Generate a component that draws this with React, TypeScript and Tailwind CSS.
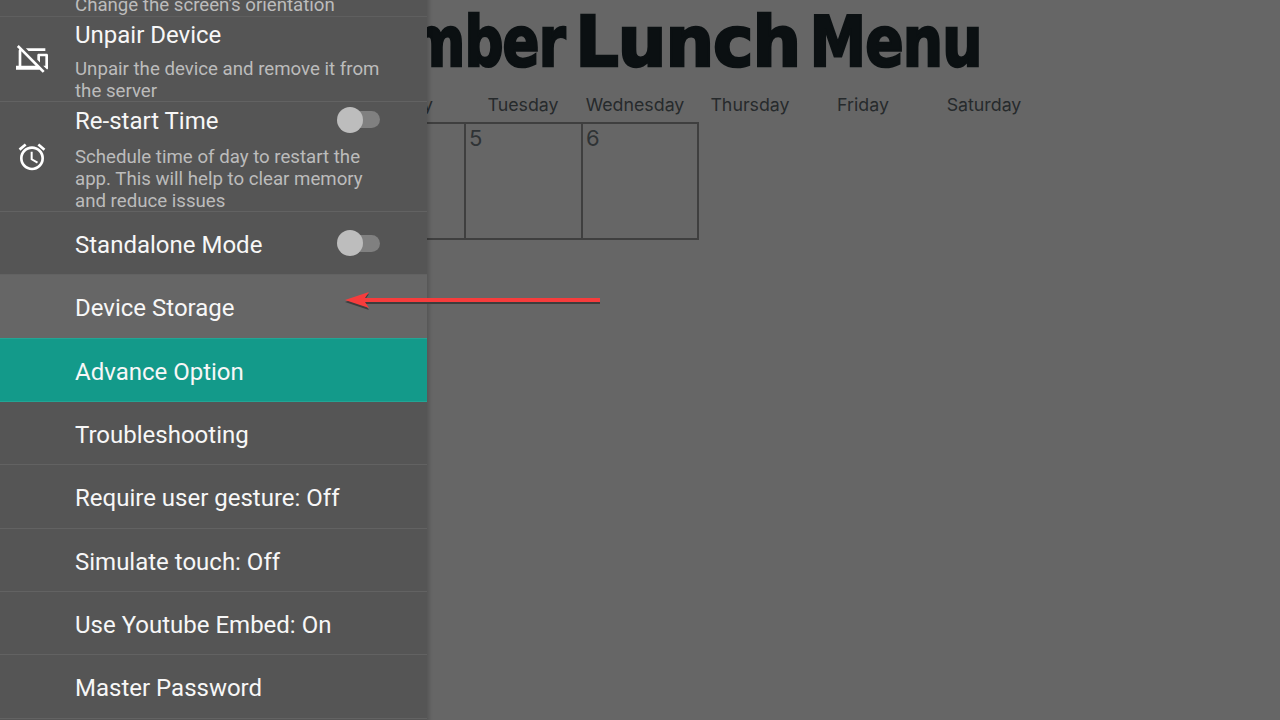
import React from "react";
import { MdOutlinePhonelinkOff, MdOutlineAccessAlarm, MdScreenRotation } from "react-icons/md";

function Toggle({ className = "" }: { className?: string }) {
  return (
    <div className={`relative ml-auto mr-[47px] w-[44px] h-[26px] shrink-0 flex items-center justify-end ${className}`}>
      <div className="w-[31px] h-[17px] rounded-full bg-[#808080]" />
      <div className="absolute left-[1px] top-0 w-[26px] h-[26px] rounded-full bg-[#bdbdbd]" />
    </div>
  );
}

function Row({ label, className = "border-[#626262]" }: { label: string; className?: string }) {
  return (
    <div className={`h-[63.33px] box-border border-b flex items-center pl-[75px] pt-[4px] text-[24px] text-[#f7f7f7] ${className}`}>
      {label}
    </div>
  );
}

function Arrow() {
  return (
    <svg className="absolute left-[340px] top-[288px]" width="265" height="24" viewBox="0 0 265 24">
      <path d="M5 13 L29 5 L25 11 L260 11 L260 15 L25 15 L29 21 Z" fill="#3d3d3d" transform="translate(0 1)" />
      <path d="M5 12 L29 4 L25 10 L260 10 L260 14 L25 14 L29 20 Z" fill="#f63c3c" />
    </svg>
  );
}

export default function App() {
  return (
    <div className="relative w-[1280px] h-[720px] overflow-hidden bg-[#666666] font-['Roboto',sans-serif]">
      <div className="pt-[1px]">
        <div className="w-[982px] h-[84px] pb-[2px] box-border flex items-center justify-end whitespace-nowrap text-[#0b1012] text-[69px] font-bold font-['DejaVu_Sans',sans-serif] [-webkit-text-stroke:2.5px_#0b1012] leading-none tracking-[-1px]">
          <div className="w-[300px] flex justify-end"><span className="inline-block origin-right scale-x-[0.79]">December</span></div>
          <div className="w-[223px] ml-[12px] flex justify-end"><span className="inline-block origin-right scale-x-[0.99]">Lunch</span></div>
          <div className="w-[167px] ml-[15px] flex justify-end"><span className="inline-block origin-right scale-x-[0.82]">Menu</span></div>
        </div>
        <div className="grid grid-cols-[116px_116px_108px_122px_104px_138px] ml-[349px] mt-[4px] h-[33px] items-center text-center text-[17.8px] text-[#262a2c] font-['Inter',sans-serif]">
          <div className="pr-[16px]">Monday</div>
          <div>Tuesday</div>
          <div>Wednesday</div>
          <div>Thursday</div>
          <div>Friday</div>
          <div>Saturday</div>
        </div>
        <div className="flex ml-[349px] h-[118px] text-[22px] text-[#2f3335] font-['Inter',sans-serif]">
          <div className="w-[117px] box-border border-y-2 border-r-2 border-[#3f3f3f]" />
          <div className="w-[117px] box-border border-y-2 border-r-2 border-[#3f3f3f] pl-[3px] leading-[28px]">5</div>
          <div className="w-[116px] box-border border-y-2 border-r-2 border-[#3f3f3f] pl-[3px] leading-[28px]">6</div>
        </div>
      </div>

      <div className="absolute left-0 top-[-45px] w-[427px] h-[770px] bg-[#555555] shadow-[2px_0_4px_rgba(0,0,0,0.18)]">
        <div className="h-[62px] box-border border-b border-[#5f5f5f] flex items-center">
          <div className="w-[75px] pl-[17px] shrink-0 text-white"><MdScreenRotation size={29} /></div>
          <div className="w-[320px] pb-[2px]">
            <div className="h-[34px] text-[24px] leading-[34px] text-[#f7f7f7]">Orientation</div>
            <div className="mt-[6px] text-[18.67px] leading-[22px] text-[#bcbcbc]">Change the screen's orientation</div>
          </div>
        </div>

        <div className="h-[85px] box-border border-b border-[#626262] flex items-center">
          <div className="w-[75px] pl-[16px] shrink-0 text-white"><MdOutlinePhonelinkOff size={32} /></div>
          <div className="w-[312px] pt-[2px]">
            <div className="h-[34px] text-[24px] leading-[34px] text-[#f7f7f7]">Unpair Device</div>
            <div className="mt-[6px] text-[18.67px] leading-[22px] text-[#bcbcbc]">Unpair the device and remove it from the server</div>
          </div>
        </div>

        <div className="h-[110px] box-border border-b border-[#626262] flex items-center">
          <div className="w-[75px] pl-[16px] shrink-0 text-white"><MdOutlineAccessAlarm size={32} /></div>
          <div className="flex-1 pt-[2px]">
            <div className="h-[34px] text-[24px] leading-[34px] text-[#f7f7f7] flex items-center">
              Re-start Time
              <Toggle className="-mt-[2px]" />
            </div>
            <div className="mt-[8px] w-[300px] text-[18.67px] leading-[22px] text-[#bcbcbc]">Schedule time of day to restart the app. This will help to clear memory and reduce issues</div>
          </div>
        </div>

        <div className="h-[63.33px] box-border border-b border-[#626262] flex items-center pl-[75px] pt-[3px] text-[24px] text-[#f7f7f7]">
          Standalone Mode
          <Toggle className="-mt-[3px]" />
        </div>
        <Row label="Device Storage" className="bg-[#666666] border-[#22a595]" />
        <Row label="Advance Option" className="bg-[#139a8a] border-[#22a595]" />
        <Row label="Troubleshooting" />
        <Row label="Require user gesture: Off" />
        <Row label="Simulate touch: Off" />
        <Row label="Use Youtube Embed: On" />
        <Row label="Master Password" />
      </div>

      <Arrow />
    </div>
  );
}
